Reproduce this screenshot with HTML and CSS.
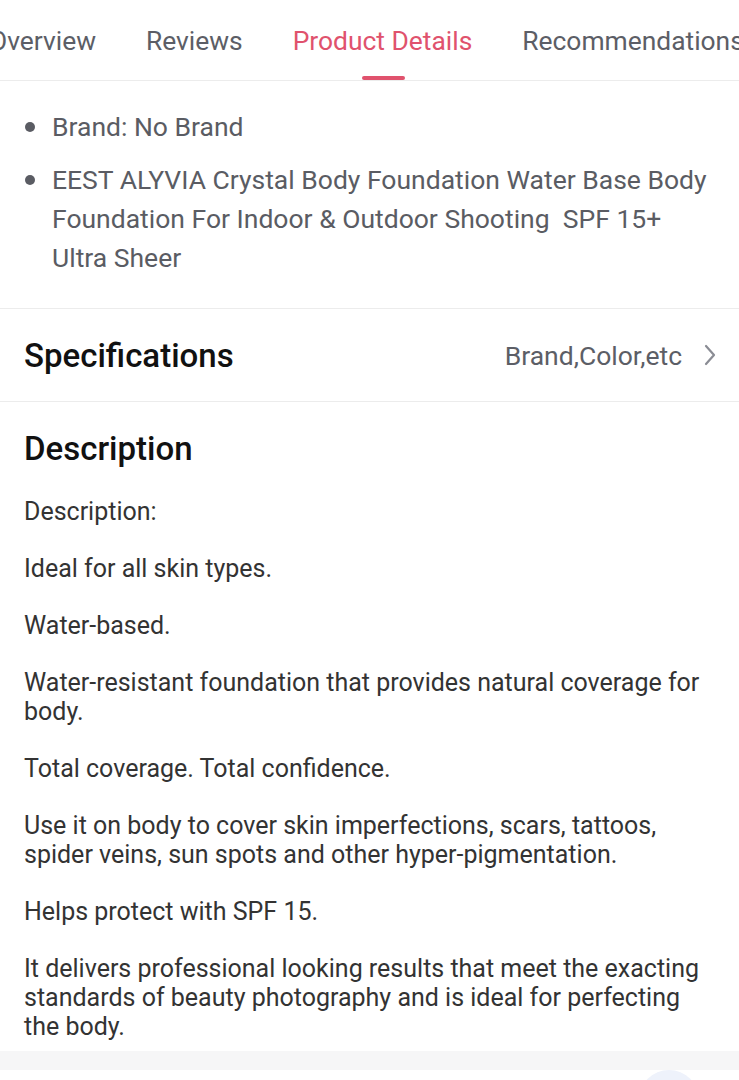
FILE: index.html
```html
<!DOCTYPE html>
<html lang="en">
<head>
    <meta charset="UTF-8">
    <meta name="viewport" content="width=device-width, initial-scale=1.0">
    <title>Product Details</title>
    <link rel="stylesheet" href="styles.css">
</head>
<body>
    <nav class="tabs">
        <div class="tab">Overview</div>
        <div class="tab">Reviews</div>
        <div class="tab active">Product Details</div>
        <div class="tab">Recommendations</div>
    </nav>

    <section class="highlights">
        <ul>
            <li>Brand: No Brand</li>
            <li>EEST ALYVIA Crystal Body Foundation Water Base Body Foundation For Indoor &amp; Outdoor Shooting&nbsp; SPF 15+ Ultra Sheer</li>
        </ul>
    </section>

    <section class="specs">
        <h2>Specifications</h2>
        <div class="specs-link">
            <span>Brand,Color,etc</span>
            <svg width="14" height="22" viewBox="0 0 14 22">
                <path d="M3 2 L11 11 L3 20" fill="none" stroke="#8a8c94" stroke-width="2.2" stroke-linecap="round" stroke-linejoin="round"/>
            </svg>
        </div>
    </section>

    <section class="description">
        <h2>Description</h2>
        <p>Description:</p>
        <p>Ideal for all skin types.</p>
        <p>Water-based.</p>
        <p>Water-resistant foundation that provides natural coverage for body.</p>
        <p>Total coverage. Total confidence.</p>
        <p>Use it on body to cover skin imperfections, scars, tattoos, spider veins, sun spots and other hyper-pigmentation.</p>
        <p>Helps protect with SPF 15.</p>
        <p>It delivers professional looking results that meet the exacting standards of beauty photography and is ideal for perfecting the body.</p>
    </section>

    <div class="gap-band"></div>

    <footer class="bottom">
        <div class="float-btn"></div>
    </footer>
</body>
</html>
```

FILE: styles.css
```css
* {
    box-sizing: border-box;
    margin: 0;
    padding: 0;
}

body {
    font-family: Roboto, "Liberation Sans", sans-serif;
    background: white;
    color: #333;
    overflow-x: hidden;
}

/* Tabs */
.tabs {
    display: flex;
    gap: 50px;
    height: 81px;
    margin-left: -11px;
    border-bottom: 1px solid #ececec;
    white-space: nowrap;
    overflow: hidden;
}

.tab {
    position: relative;
    font-size: 26.4px;
    color: #5c5e66;
    line-height: 82px;
    flex-shrink: 0;
}

.tab.active {
    color: #e0526d;
}

.tab.active::after {
    content: "";
    position: absolute;
    left: 50%;
    bottom: 0;
    width: 43px;
    height: 4px;
    margin-left: -21px;
    border-radius: 2px;
    background: #e0526d;
}

/* Highlights */
.highlights {
    padding: 26px 24px 31px 24px;
    border-bottom: 1px solid #ececec;
}

.highlights ul {
    list-style: none;
    display: flex;
    flex-direction: column;
    gap: 14px;
}

.highlights li {
    position: relative;
    padding-left: 28px;
    font-size: 26.5px;
    line-height: 39px;
    color: #5a5c63;
}

.highlights li::before {
    content: "";
    position: absolute;
    left: 1px;
    top: 15px;
    width: 10px;
    height: 10px;
    border-radius: 50%;
    background: #5a5c63;
}

/* Specifications */
.specs {
    display: flex;
    justify-content: space-between;
    align-items: center;
    height: 93px;
    padding: 0 22px 0 24px;
    border-bottom: 1px solid #ececec;
}

.specs h2,
.description h2 {
    font-size: 33px;
    font-weight: 500;
    color: #111;
}

.specs-link {
    display: flex;
    align-items: center;
    gap: 21px;
    font-size: 26.5px;
    color: #5c5e66;
}

/* Description */
.description {
    padding: 29px 24px 10px 24px;
}

.description h2 {
    line-height: 36px;
    margin-bottom: 30px;
}

.description p {
    font-size: 25px;
    line-height: 29px;
    color: #333;
    margin-bottom: 28px;
}

.description p:last-child {
    margin-bottom: 0;
}

.gap-band {
    height: 19px;
    background: #f6f6f7;
}

.bottom {
    display: flex;
    justify-content: flex-end;
    padding: 0 40px 0 0;
    height: 60px;
}

.float-btn {
    width: 60px;
    height: 60px;
    border-radius: 50%;
    background: #eef2fb;
}
```
